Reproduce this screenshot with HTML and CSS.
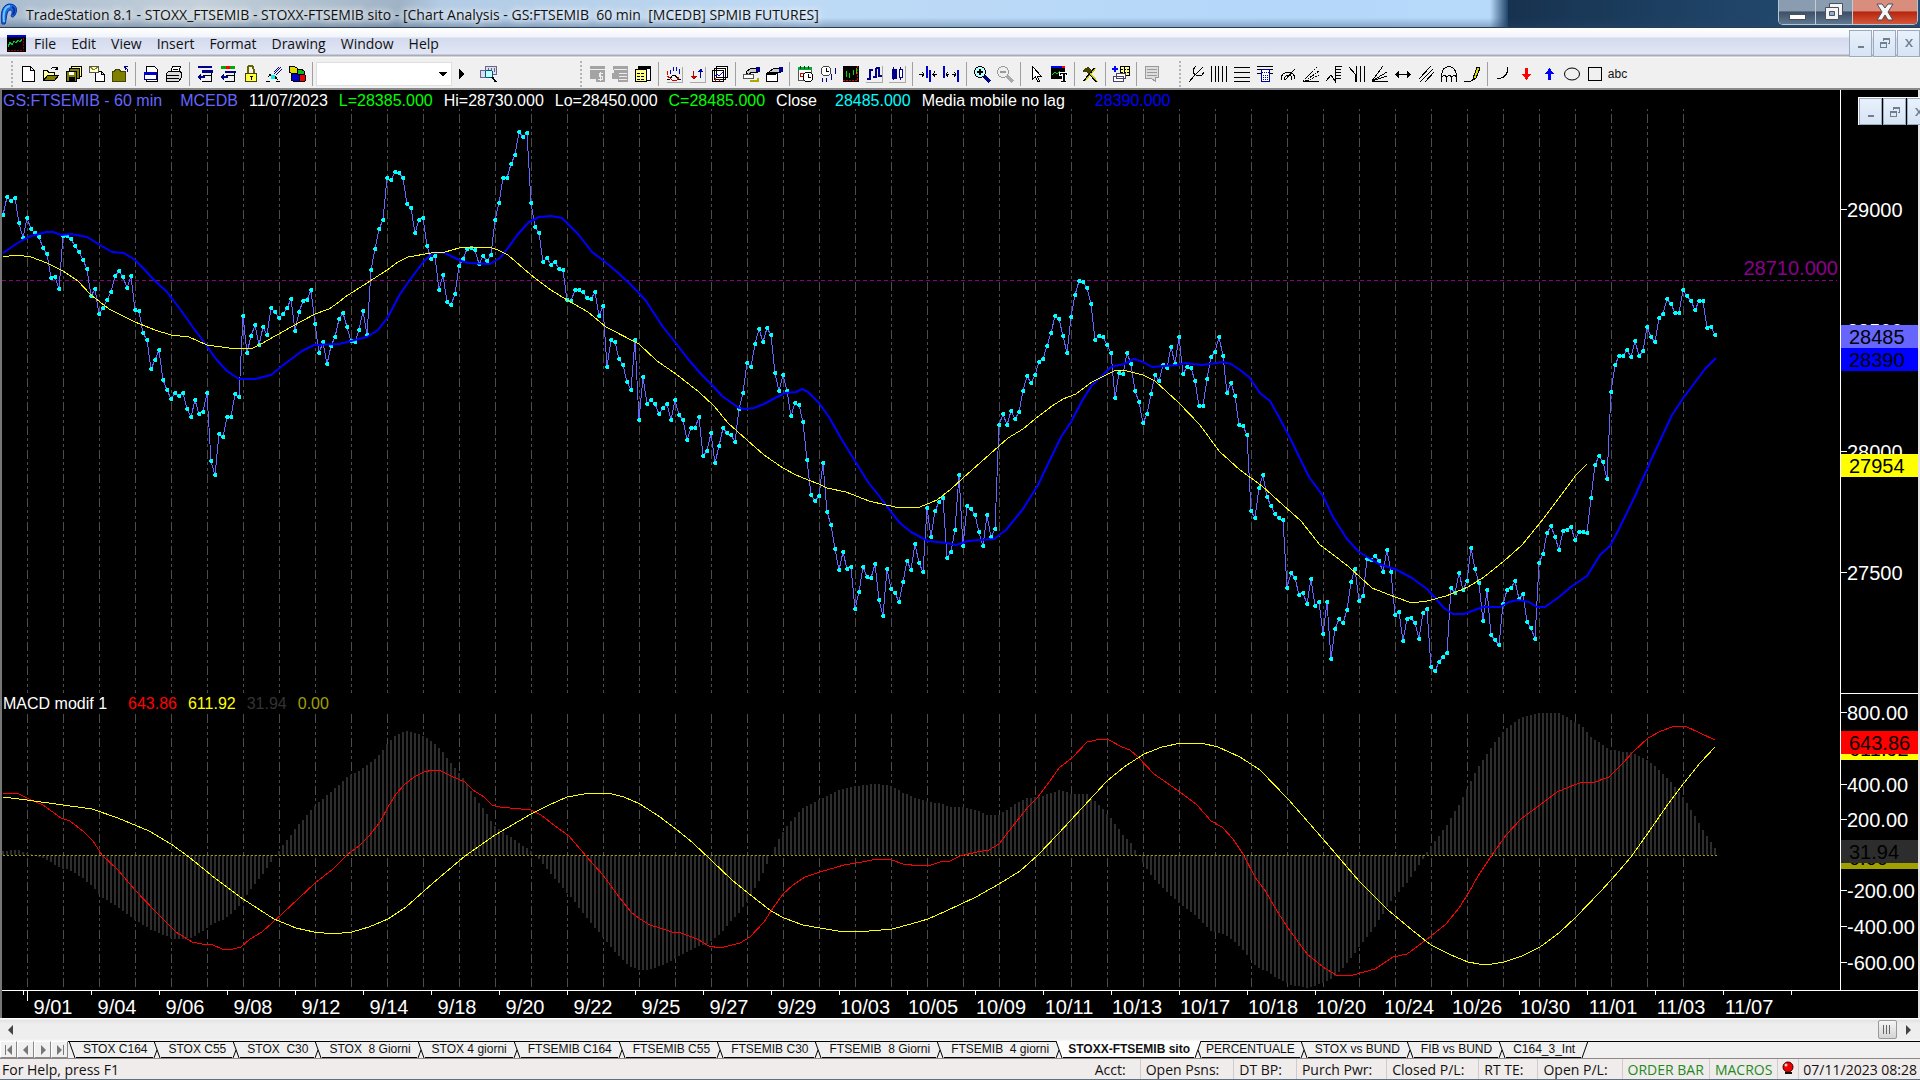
FILE: index.html
```html
<!DOCTYPE html>
<html lang="en">
<head>
<meta charset="utf-8">
<title>TradeStation 8.1 - STOXX_FTSEMIB</title>
<link rel="stylesheet" href="styles.css">
</head>
<body>
<header class="titlebar">
  <svg class="logo" viewBox="0 0 18 24"><path d="M2 22C0 12 2 3 9 2c8 0 9 6 6 11-1 2-3 3-4 1 2-4 1-6-1-6-4 1-3 8-5 14z" fill="#1b6be0" stroke="#0a2f9c"/><path d="M4 20C3 12 4 5 10 4" stroke="#6cc4ff" stroke-width="2" fill="none"/><path d="M12 5c3 1 3 4 1 8" stroke="#0a2f9c" stroke-width="2" fill="none"/></svg>
  <h1 class="caption">TradeStation 8.1 - STOXX_FTSEMIB - STOXX-FTSEMIB sito - [Chart Analysis - GS:FTSEMIB&nbsp; 60 min&nbsp; [MCEDB] SPMIB FUTURES]</h1>
  <div class="winbtns">
    <button class="win" aria-label="Minimize"><svg viewBox="0 0 36 24"><rect x="10.500" y="14.500" width="16" height="5" fill="#fff" stroke="#4a4f5c"/></svg></button>
    <button class="win" aria-label="Restore"><svg viewBox="0 0 36 24"><path d="M13.500 3.500h13v12h-13z" fill="#f4f4f4" stroke="#4a4f5c"/><path d="M9.500 7.500h13v12h-13z" fill="#f4f4f4" stroke="#4a4f5c"/><path d="M13.500 11.500h5v4h-5z" fill="#8fb0cc" stroke="#4a4f5c"/></svg></button>
    <button class="win close" aria-label="Close"><svg viewBox="0 0 36 24"><path d="M10 4h5l3 4 3-4h5l-5 8 5 8h-5l-3-5-3 5h-5l5-8z" fill="#f6f6f6" stroke="#4a4f5c"/></svg></button>
  </div>
</header>

<nav class="menubar">
  <svg class="doc" viewBox="0 0 19 17" shape-rendering="crispEdges"><path d="M0 0h19v17H0z"/><path d="M0 0h19v2H0z" fill="#00f"/><path d="M1 12l2-5 2 3 2-4 2 2 2-3 2 2 2-3" stroke="#0c3" fill="none"/><path d="M16 3v13M1 15h15" stroke="#900" stroke-dasharray="2 1" fill="none"/></svg>
  <a href="#file">File</a><a href="#edit">Edit</a><a href="#view">View</a><a href="#insert">Insert</a><a href="#format">Format</a><a href="#drawing">Drawing</a><a href="#window">Window</a><a href="#help">Help</a>
  <div class="mdi">
    <button aria-label="Minimize document"><svg viewBox="0 0 12 12"><path d="M3 9h6v2H3z"/></svg></button>
    <button aria-label="Restore document"><svg viewBox="0 0 12 12"><path d="M4 1h7v6H9V6h1V3H5v1H4zM1 5h7v6H1zM2 7v3h5V7z" fill-rule="evenodd"/></svg></button>
    <button aria-label="Close document"><svg viewBox="0 0 12 12"><path d="M2 2h2l2 3 2-3h2L7 6l3 4H8L6 7l-2 3H2l3-4z"/></svg></button>
  </div>
</nav>

<div class="toolbar" role="toolbar">
  <div class="group first">
    <span class="grip"></span>
    <button aria-label="New"><svg viewBox="0 0 18 18"><path d="M3.500 1.500h8l4 4v11h-12zM11.500 1.500v4h4" fill="#fff" stroke="#000"/></svg></button>
    <button aria-label="Open"><svg viewBox="0 0 18 18"><path d="M1.500 15.500v-10h4l1 2h6v3" fill="#ffffa0" stroke="#000"/><path d="M1.500 15.500l4-5h11l-4 5z" fill="#808000" stroke="#000"/><path d="M9.500 3.500q4-3 6 1m0-3v3h-3" fill="none" stroke="#000"/></svg></button>
    <button aria-label="Save all"><svg viewBox="0 0 18 18"><path d="M6.500 1.500h10v10h-10z" fill="#ff8" stroke="#000"/><path d="M4.500 3.500h10v10h-10z" fill="#808000" stroke="#000"/><path d="M1.500 6.500h10v10h-10z" fill="#808000" stroke="#000"/><path d="M4 7h5v3H4z" fill="#fff"/><path d="M4 12h6v4H4z"/></svg></button>
    <button aria-label="Mail"><svg viewBox="0 0 18 18"><path d="M7.500 6.500h6l3 3v7h-9zM13.500 6.500v3h3" fill="#fff" stroke="#000"/><path d="M1.500 1.500h9v6h-9z" fill="#ffc" stroke="#555"/><path d="M2 2l4 3 4-3" fill="none" stroke="#880"/></svg></button>
    <button aria-label="Close workspace"><svg viewBox="0 0 18 18"><path d="M1.500 16.500v-10h2l1-2h4l1 2h5v10z" fill="#808000" stroke="#440"/><path d="M17 7q0-4-4-5m1-1v4M13 1h4" fill="none" stroke="#008"/></svg></button>
    <span class="sep"></span>
    <button aria-label="Print preview"><svg viewBox="0 0 18 18"><path d="M4.500 1.500h8l3 3v12h-11z" fill="#fff" stroke="#000"/><path d="M2.500 7.500h12v7h-12z" fill="#fff" stroke="#008"/><path d="M2 7h13v3H2z" fill="#00c"/></svg></button>
    <button aria-label="Print"><svg viewBox="0 0 18 18"><path d="M5.500 8.500l2-7h8l-2 7z" fill="#fff" stroke="#000"/><path d="M1.500 8.500l2-2h12l1 2v4l-3 4h-12z" fill="#ddd" stroke="#000"/><path d="M2 10h12M2 13h12M8 4h5M7 6h5" stroke="#000"/></svg></button>
    <span class="sep"></span>
    <button aria-label="Chart list"><svg viewBox="0 0 18 18"><path d="M2 1h14v2H2zM6 5h11v3H6z" fill="#008"/><path d="M7 10.500h8M6 16.500h10M15.500 8v9" stroke="#000"/><path d="M1 12l4-3v2h4v2H5v2z" fill="#008"/></svg></button>
    <button aria-label="Radar list"><svg viewBox="0 0 18 18"><path d="M2 1h14v3H2z" fill="#0a0"/><path d="M7 1h4v3H7z" fill="#f00"/><path d="M6 6h11v2H6z" fill="#008"/><path d="M7 10.500h8M6 16.500h10M15.500 8v9" stroke="#000"/><path d="M1 12l4-3v2h4v2H5v2z" fill="#008"/></svg></button>
    <button aria-label="Lock"><svg viewBox="0 0 18 18"><path d="M5.500 8V4q0-3 3-3t3 3v4" fill="none" stroke="#660" stroke-width="2"/><path d="M3.500 8.500h11v8h-11z" fill="#ff4" stroke="#440"/><path d="M8 11h3v1h-1v3H9v-3H8z"/></svg></button>
    <button aria-label="Satellite"><svg viewBox="0 0 18 18"><path d="M9 9l7-7M11 10l6-6M9 7l5-5" stroke="#008"/><path d="M4 9l7 5M3 12q5-5 10 3M1 16h4M11 16h4" stroke="#000" fill="none"/><path d="M6 10h4v4H6z" fill="#0ee"/></svg></button>
    <button aria-label="Blocks"><svg viewBox="0 0 18 18"><path d="M1 2l4-1 4 2v5l-4 1-4-2z" fill="#dd0" stroke="#000"/><path d="M9 5l4-1 3 2v5H9z" fill="#0b2" stroke="#000"/><path d="M3 9l4-1 4 2v6l-4 1-4-2z" fill="#00c" stroke="#000"/><path d="M11 10l3-1 3 1v6l-3 1-3-1z" fill="#e00" stroke="#000"/></svg></button>
    <span class="sep"></span>
    <select class="symbol" aria-label="Symbol"><option></option></select>
    <button class="go" aria-label="Go"><svg viewBox="0 0 18 18"><path d="M7 4l5 5-5 5z"/></svg></button>
    <button class="find" aria-label="Symbol lookup"><svg viewBox="0 0 18 18"><path d="M6.500 1.500h11v8h-11zM1.500 5.500h5v7h-5z" fill="#dde" stroke="#668"/><path d="M9 3v4m3-4v4m3-4v4" stroke="#668"/><circle cx="10" cy="9" r="4" fill="#bff" stroke="#058"/><path d="M13 12l4 5" stroke="#000" stroke-width="2"/></svg></button>
  </div>

  <div class="group second">
    <span class="grip"></span>
    <button aria-label="Buy" disabled><svg viewBox="0 0 18 18"><path d="M2 1h15v16H8v-3H2z" fill="#a4a4a4"/><path d="M2 4.500h15" stroke="#eee"/><path d="M15 8.500h-4v3h3v3h-4M12.500 7v9" fill="none" stroke="#eee"/></svg></button>
    <button aria-label="Orders" disabled><svg viewBox="0 0 18 18"><path d="M2 1h15v16H7v-3H1V8h2z" fill="#a4a4a4"/><path d="M3 4.500h13M8 8.500h8M8 11.500h8M8 14.500h8" stroke="#eee"/></svg></button>
    <button aria-label="Data window"><svg viewBox="0 0 18 18"><path d="M4.500 1.500h12v14h-12z" fill="#fff" stroke="#000"/><path d="M4 1h13v3H4z"/><path d="M1.500 4.500h11v12h-11z" fill="#ff8" stroke="#000"/><path d="M3 8.500h8M3 11.500h8M3 14.500h8" stroke="#000" stroke-dasharray="3 1"/></svg></button>
    <span class="sep"></span>
    <button aria-label="Indicators"><svg viewBox="0 0 18 18"><path d="M17.500 2v15.500H2" fill="none" stroke="#aaa"/><path d="M5.500 5v4m3-7v4m3-4v4m3-2v5" stroke="#00c"/><path d="M2.500 6v4" stroke="#d00"/><path d="M2 15l3-1 3-4h2l3 4 3 1" fill="none" stroke="#000"/><path d="M2 11l3 2 2 2h5l2-3" fill="none" stroke="#c00"/></svg></button>
    <button aria-label="Signals"><svg viewBox="0 0 18 18"><path d="M17.500 2v15.500H2" fill="none" stroke="#aaa"/><path d="M5 6h1v5h3l-3 4-3-4h2z" fill="#b00"/><path d="M12 13h1V7h2l-2-4-3 4h2z" fill="#00a"/></svg></button>
    <button aria-label="Strategies"><svg viewBox="0 0 18 18"><path d="M5.500 1.500h11v11h-11zM3.500 3.500h11v11h-11zM1.500 5.500h11v11h-11z" fill="#fff" stroke="#000"/><path d="M3 12l3-3 2 2 4-4" fill="none" stroke="#00c"/><path d="M4.500 13v3m4-2v2" stroke="#c00"/></svg></button>
    <span class="sep"></span>
    <button aria-label="Format symbol"><svg viewBox="0 0 18 18"><path d="M4 7l5-4h6v4h-5l-4 3z" fill="#ccc" stroke="#000"/><path d="M14 2h4v5h-4z" fill="#008"/><path d="M1.500 9.500h10v4h-10z" fill="#fff" stroke="#555"/><path d="M8 16h8v-3" fill="none" stroke="#aa0" stroke-width="2"/></svg></button>
    <button aria-label="Format window"><svg viewBox="0 0 18 18"><path d="M4 7l5-4h6v4h-5l-4 3z" fill="#ccc" stroke="#000"/><path d="M14 2h4v5h-4z" fill="#008"/><path d="M1.500 8.500h11v8h-11z" fill="#fff" stroke="#000"/><path d="M2 7h9v3H2z"/></svg></button>
    <span class="sep"></span>
    <button aria-label="Sessions"><svg viewBox="0 0 18 18"><path d="M2.500 3.500h13v12h-13z" fill="#fff" stroke="#555"/><path d="M2 2h14v3H2z" fill="#0a3"/><path d="M4.500 1v3m4-3v3m4-3v3" stroke="#040"/><path d="M4.500 8.500h3v3h-3z" fill="none" stroke="#d00"/><circle cx="12" cy="12" r="5" fill="#fff" stroke="#000"/><path d="M12 9v3h3" fill="none" stroke="#000"/></svg></button>
    <button aria-label="Interval"><svg viewBox="0 0 18 18"><circle cx="7" cy="6" r="5" fill="#fff" stroke="#444"/><path d="M7 3v3h3" fill="none" stroke="#000"/><path d="M3.500 13v4m4-4v4m5-8v6m4-12v6" stroke="#008"/></svg></button>
    <button aria-label="OHLC"><svg viewBox="0 0 18 18"><path d="M1 1h16v16H1z"/><path d="M4.500 6v6m3-4v5m4-8v5m3-7v6" stroke="#0d0"/><path d="M1 15.500h14.500V1" fill="none" stroke="#d00" stroke-dasharray="2 1"/></svg></button>
    <button aria-label="Bars"><svg viewBox="0 0 18 18"><path d="M17.500 1v16.500H1" fill="none" stroke="#aaa"/><path d="M5 4v11M2 14h3M5 5h3M11 3v9h-3M11 3h4M14 2v9h3" fill="none" stroke="#008" stroke-width="2"/></svg></button>
    <button aria-label="Candlesticks"><svg viewBox="0 0 18 18"><path d="M17.500 1v16.500H1" fill="none" stroke="#aaa"/><path d="M4 4h4v9H4zM5.500 2v13" fill="#008" stroke="#008"/><path d="M11.500 4.500h3v8h-3zM12.500 2v2m0 9v2" fill="#fff" stroke="#008"/></svg></button>
    <span class="sep"></span>
    <button aria-label="Compress"><svg viewBox="0 0 18 18"><path d="M8 1v12M11 5v12" stroke="#00c" stroke-width="2"/><path d="M0 9.500h5M3 7l2 2-2 3M18 9.500h-4m2-3l-2 3 2 2" fill="none" stroke="#000"/></svg></button>
    <button aria-label="Expand"><svg viewBox="0 0 18 18"><path d="M2 1v12M16 5v12" stroke="#00c" stroke-width="2"/><path d="M4 9.500h3m3 0h4M6 7L4 9l2 3m6-5l2 2-2 3" fill="none" stroke="#000"/></svg></button>
    <span class="sep"></span>
    <button aria-label="Zoom in"><svg viewBox="0 0 18 18"><path d="M11 11l6 6" stroke="#008" stroke-width="3"/><circle cx="7" cy="7" r="5.500" fill="#bff" stroke="#000"/><path d="M4 7h6M7 4v6" stroke="#000" stroke-width="2"/></svg></button>
    <button aria-label="Zoom out" disabled><svg viewBox="0 0 18 18"><path d="M11 11l6 6" stroke="#aaa" stroke-width="3"/><circle cx="7" cy="7" r="5.500" fill="#eee" stroke="#999"/><path d="M4 7h6" stroke="#999" stroke-width="2"/></svg></button>
    <span class="sep"></span>
    <button aria-label="Pointer"><svg viewBox="0 0 18 18"><path d="M5.500 1.500v13l3-3 2 5h2l-2-5h4z" fill="#fff" stroke="#000"/></svg></button>
    <button aria-label="Text tool"><svg viewBox="0 0 18 18"><path d="M1 1h14v13H1z"/><path d="M1 1h11v2H1z" fill="#00f"/><path d="M12 1h3v2h-3z" fill="#f00"/><path d="M2 10l3-3 2 2 3-3" fill="none" stroke="#0d0"/><path d="M9 7h9v4h-2v5h1v2h-6v-2h1v-5H9z" fill="#fff"/><path d="M10 8h7v2h-1V9h-1v7h1v1h-5v-1h2V9h-2v1h-1z"/></svg></button>
    <span class="sep"></span>
    <button aria-label="Build"><svg viewBox="0 0 18 18"><path d="M3 16L14 3" stroke="#000" stroke-width="2"/><path d="M7 7l9 10" stroke="#000" stroke-width="2"/><path d="M4 16L15 3M8 7l9 10" stroke="#cc0"/><path d="M2 7V5l5-3 4 3-4 4-2-2z" fill="#440"/></svg></button>
    <span class="sep"></span>
    <button aria-label="Add shortcut"><svg viewBox="0 0 18 18"><path d="M8.500 1.500h9v9h-9z" fill="#ff8" stroke="#000"/><path d="M9 4.500h8M9 7.500h8M12.500 2v8" stroke="#000" stroke-dasharray="2 1"/><path d="M4.500 8.500h9v5h-9zM1.500 11.500h10v5h-10z" fill="#fff" stroke="#446"/><path d="M0 4h6M3 1v6" stroke="#00f" stroke-width="2"/></svg></button>
    <span class="sep"></span>
    <button aria-label="Notes" disabled><svg viewBox="0 0 18 18"><path d="M2.500 1.500h13v11h-3v4l-4-3h-6z" fill="#ddd" stroke="#999"/><path d="M4 4.500h10M4 7.500h10M4 10.500h10" stroke="#999"/></svg></button>
  </div>

  <div class="group third">
    <span class="grip"></span>
    <button aria-label="Andrews pitchfork"><svg viewBox="0 0 18 18"><path d="M2 17l6-7M8 10l8-8M6 5q0 7 9 5M6 5l3-4M15 10l2-3" fill="none" stroke="#000"/></svg></button>
    <button aria-label="Vertical lines"><svg viewBox="0 0 18 18"><path d="M1.500 1v16M5.500 1v16M8.500 1v16M12.500 1v16M16.500 1v16" stroke="#000"/></svg></button>
    <button aria-label="Horizontal lines"><svg viewBox="0 0 18 18"><path d="M1 2.500h16M1 7.500h16M1 12.500h16M1 16.500h16" stroke="#000"/></svg></button>
    <button aria-label="Calculator"><svg viewBox="0 0 18 18"><path d="M1 1.500h16M1 4.500h16M1 8.500h16" stroke="#000"/><path d="M5.500 4.500h8v12h-8z" fill="#fff" stroke="#00a"/><path d="M6 7.500h8M7 10.500h6M7 12.500h6M7 14.500h6" stroke="#00a" stroke-dasharray="1 1"/></svg></button>
    <button aria-label="Arcs"><svg viewBox="0 0 18 18"><path d="M2 15q0-8 8-8 5 0 6 7M5 15q1-5 5-5 3 0 3 5M6 15L16 4" fill="none" stroke="#000"/></svg></button>
    <button aria-label="Fan dotted"><svg viewBox="0 0 18 18"><path d="M1 16.500h16" stroke="#000"/><path d="M1 16L16 1M3 16L17 6M5 16l12-6" stroke="#000" stroke-dasharray="2 1"/></svg></button>
    <button aria-label="Retracement"><svg viewBox="0 0 18 18"><path d="M1 16l5-6 4 6V1h7M10 4.500h6M10 7.500h6M10 10.500h6M10 13.500h6" fill="none" stroke="#000"/></svg></button>
    <button aria-label="Time lines"><svg viewBox="0 0 18 18"><path d="M1 2l6 7v8M8.500 1v16M12.500 1v16M16.500 1v16" fill="none" stroke="#000"/></svg></button>
    <button aria-label="Fan"><svg viewBox="0 0 18 18"><path d="M1 16.500h16M1 16L12 1M1 16L16 7M1 16l15-5" stroke="#000"/></svg></button>
    <button aria-label="Horizontal extend"><svg viewBox="0 0 18 18"><path d="M2 9.500h14" stroke="#000"/><path d="M5 6v7L1 9.500zM13 6v7l4-3.500z"/></svg></button>
    <button aria-label="Parallel lines"><svg viewBox="0 0 18 18"><path d="M2 14L14 1M3 17L16 4M8 17l9-10" stroke="#000"/></svg></button>
    <button aria-label="Cycles"><svg viewBox="0 0 18 18"><path d="M1.500 17v-7q1-8 7.500-8.500Q15.500 2 16.500 10v7M1.500 12q3-3 5 0 3-3 5 0 3-3 5 0M6.500 12v5M11.500 12v5" fill="none" stroke="#000"/></svg></button>
    <button aria-label="Pencil"><svg viewBox="0 0 18 18"><path d="M10.500 12L14 2l3 1-4 10-3 2z" fill="#dd0" stroke="#000"/><path d="M1 16.500h6l3-2" fill="none" stroke="#000"/></svg></button>
    <span class="sep"></span>
    <button aria-label="Arc"><svg viewBox="0 0 18 18"><path d="M14 2q0 11-11 12" fill="none" stroke="#000"/></svg></button>
    <button aria-label="Down arrow"><svg viewBox="0 0 18 18"><path d="M8 3h3v6h3l-4.500 6L5 9h3z" fill="#f00"/></svg></button>
    <button aria-label="Up arrow"><svg viewBox="0 0 18 18"><path d="M8 15h3V9h3L9.500 3 5 9h3z" fill="#00f"/></svg></button>
    <button aria-label="Ellipse"><svg class="smooth" viewBox="0 0 18 18"><ellipse cx="9" cy="9" rx="7.500" ry="6" fill="none" stroke="#000"/></svg></button>
    <button aria-label="Rectangle"><svg viewBox="0 0 18 18"><path d="M2.500 2.500h13v13h-13z" fill="none" stroke="#000"/></svg></button>
    <button class="abc" aria-label="Text">abc</button>
  </div>
</div>

<main class="chart">
  <section class="panel">
    <p class="legend price-legend"><span class="c-violet">GS:FTSEMIB - 60 min</span><span class="c-violet">MCEDB</span><span>11/07/2023</span><span class="c-green">L=28385.000</span><span>Hi=28730.000</span><span>Lo=28450.000</span><span class="c-green">C=28485.000</span><span>Close</span><span class="c-cyan">28485.000</span><span>Media mobile no lag</span><span class="c-blue">28390.000</span></p>
    <svg id="price" viewBox="2 90 1838 603"></svg>
  </section>
  <section class="scale"><svg id="priceScale" viewBox="1840 90 78 603"></svg></section>
  <section class="panel">
    <p class="legend macd-legend"><span>MACD modif 1</span><span class="c-red">643.86</span><span class="c-yellow">611.92</span><span class="c-dim">31.94</span><span class="c-olive">0.00</span></p>
    <svg id="macd" viewBox="2 693 1838 297"></svg>
  </section>
  <section class="scale"><svg id="macdScale" viewBox="1840 693 78 297"></svg></section>
  <section class="dates"><svg id="dates" viewBox="2 990 1916 28"></svg></section>
  <div class="mdi floating">
    <button aria-label="Minimize chart"><svg viewBox="0 0 12 12"><path d="M3 9h6v2H3z"/></svg></button>
    <button aria-label="Restore chart"><svg viewBox="0 0 12 12"><path d="M4 1h7v6H9V6h1V3H5v1H4zM1 5h7v6H1zM2 7v3h5V7z" fill-rule="evenodd"/></svg></button>
    <button aria-label="Close chart"><svg viewBox="0 0 12 12"><path d="M2 2h2l2 3 2-3h2L7 6l3 4H8L6 7l-2 3H2l3-4z"/></svg></button>
  </div>
</main>

<div class="hscroll">
  <button aria-label="Scroll left"><svg viewBox="0 0 10 12"><path d="M7 1v10L2 6z"/></svg></button>
  <span class="track"><span class="thumb"></span></span>
  <button aria-label="Scroll right"><svg viewBox="0 0 10 12"><path d="M3 1v10l5-5z"/></svg></button>
</div>

<nav class="tabs">
  <div class="tabnav">
    <button aria-label="First"><svg viewBox="0 0 12 12"><path d="M2 1h1v10H2zM9 1v10L4 6z"/></svg></button>
    <button aria-label="Previous"><svg viewBox="0 0 12 12"><path d="M8 1v10L3 6z"/></svg></button>
    <button aria-label="Next"><svg viewBox="0 0 12 12"><path d="M4 1v10l5-5z"/></svg></button>
    <button aria-label="Last"><svg viewBox="0 0 12 12"><path d="M9 1h1v10H9zM3 1v10l5-5z"/></svg></button>
  </div>
  <svg class="edge" viewBox="0 0 8 17"><path d="M1 0l6 17"/></svg>
  <a href="#t1">STOX C164</a><svg class="edge" viewBox="0 0 8 17"><path d="M1 0l6 17M1 17l3-8"/></svg>
  <a href="#t2">STOX C55</a><svg class="edge" viewBox="0 0 8 17"><path d="M1 0l6 17M1 17l3-8"/></svg>
  <a href="#t3">STOX  C30</a><svg class="edge" viewBox="0 0 8 17"><path d="M1 0l6 17M1 17l3-8"/></svg>
  <a href="#t4">STOX  8 Giorni</a><svg class="edge" viewBox="0 0 8 17"><path d="M1 0l6 17M1 17l3-8"/></svg>
  <a href="#t5">STOX 4 giorni</a><svg class="edge" viewBox="0 0 8 17"><path d="M1 0l6 17M1 17l3-8"/></svg>
  <a href="#t6">FTSEMIB C164</a><svg class="edge" viewBox="0 0 8 17"><path d="M1 0l6 17M1 17l3-8"/></svg>
  <a href="#t7">FTSEMIB C55</a><svg class="edge" viewBox="0 0 8 17"><path d="M1 0l6 17M1 17l3-8"/></svg>
  <a href="#t8">FTSEMIB C30</a><svg class="edge" viewBox="0 0 8 17"><path d="M1 0l6 17M1 17l3-8"/></svg>
  <a href="#t9">FTSEMIB  8 Giorni</a><svg class="edge" viewBox="0 0 8 17"><path d="M1 0l6 17M1 17l3-8"/></svg>
  <a href="#t10">FTSEMIB  4 giorni</a><svg class="edge" viewBox="0 0 8 17"><path class="lit" d="M1 0l6 17h1V0z"/><path d="M1 0l6 17M1 17l3-8"/></svg>
  <a href="#t11" class="active">STOXX-FTSEMIB sito</a><svg class="edge" viewBox="0 0 8 17"><path class="lit" d="M7 0L1 17H0V0z"/><path d="M7 0L1 17M4 9l3 8"/></svg>
  <a href="#t12" class="after">PERCENTUALE</a><svg class="edge" viewBox="0 0 8 17"><path d="M1 0l6 17M1 17l3-8"/></svg>
  <a href="#t13">STOX vs BUND</a><svg class="edge" viewBox="0 0 8 17"><path d="M1 0l6 17M1 17l3-8"/></svg>
  <a href="#t14">FIB vs BUND</a><svg class="edge" viewBox="0 0 8 17"><path d="M1 0l6 17M1 17l3-8"/></svg>
  <a href="#t15">C164_3_Int</a><svg class="edge" viewBox="0 0 8 17"><path d="M7 0L1 17"/></svg>
</nav>

<footer class="status">
  <span class="help">For Help, press F1</span>
  <span>Acct:</span><span>Open Psns:</span><span>DT BP:</span><span>Purch Pwr:</span><span>Closed P/L:</span><span>RT TE:</span><span>Open P/L:</span><span class="on">ORDER BAR</span><span class="on">MACROS</span>
  <span class="ball"><svg viewBox="0 0 12 14"><circle cx="6" cy="6" r="5" fill="#e00" stroke="#400"/><path d="M3 12h7" stroke="#111" stroke-width="2"/><circle cx="4" cy="4" r="1.500" fill="#fcc"/></svg></span>
  <span>07/11/2023 08:28</span>
</footer>
<script src="chart.js"></script>
</body>
</html>
```

FILE: styles.css
```css
* { box-sizing: border-box; }
body {
  margin: 0;
  min-height: 100vh;
  display: flex;
  flex-direction: column;
  background: #f0eeec;
  font: 14px/18px "Open Sans", "Noto Sans", sans-serif;
  color: #111;
  overflow-x: hidden;
}
button { margin: 0; padding: 0; border: 0; background: none; font: inherit; color: inherit; }
a { color: inherit; text-decoration: none; }
svg { display: block; }

/* Title bar */
.titlebar {
  display: flex;
  align-items: flex-start;
  height: 28px;
  border-bottom: 1px solid #2c3d50;
  background:
    linear-gradient(180deg, transparent 65%, rgba(40, 70, 110, .35)),
    linear-gradient(90deg, #a9bccf 0, #c4d0da 200px, #9fb3c6 400px, #b3cbe4 440px, #bedaf5 800px, #b4d7fa 1300px, #b8dafa 1490px, #1f4468 1508px, #17324f 78%, #1f4468 90%, #274e74);
}
.logo { width: 18px; height: 24px; margin: 2px 8px 0 0; }
.caption {
  flex: 1;
  margin: 0;
  padding: 5px 0 0;
  font-size: 14px;
  font-weight: 400;
  line-height: 20px;
  white-space: nowrap;
  text-shadow: 0 0 6px #fff, 0 0 10px #fff;
}
.winbtns {
  display: flex;
  height: 25px;
  margin-right: 2px;
  border: 1px solid #b8c4d0;
  border-top: 0;
  border-radius: 0 0 5px 5px;
  overflow: hidden;
}
.win { width: 37px; display: grid; place-items: center; background: linear-gradient(#8a9cb0 0 45%, #3c5068 50%, #60788f); border-right: 1px solid #c3ccd6; }
.win svg { width: 36px; height: 24px; }
.win.close { width: 64px; border: 0; background: linear-gradient(#d98d7d 0 45%, #b8250f 50%, #d4573a); }

/* Menu */
.menubar {
  display: flex;
  align-items: center;
  height: 30px;
  padding-left: 7px;
  background: linear-gradient(#fff 0, #f1f4fb 9px, #d5dbee 10px, #e0e6f4 26px, #a9adb8 27px, #a9adb8 28px, #f8f8f8 29px);
}
.menubar .doc { width: 19px; height: 17px; margin-right: 8px; }
.menubar a { margin-right: 15px; padding-top: 2px; }
.mdi { display: flex; gap: 1px; }
.menubar .mdi { margin-left: auto; }
.mdi button { width: 23px; height: 27px; display: grid; place-items: center; border: 1px solid #9aabc0; background: linear-gradient(#e9f1fb, #d6e4f4); }
.mdi svg { width: 12px; height: 12px; fill: #6f7f92; }
.floating { position: absolute; right: -12px; top: 7px; border-top: 1px solid #fff; border-left: 1px solid #fff; }

/* Toolbar */
.toolbar {
  display: flex;
  height: 32px;
  padding: 2px 0 0 9px;
  background: #f0f0f0;
  border-bottom: 2px solid #8a8a8a;
  overflow: hidden;
}
.group { display: flex; align-items: center; }
.group.second { margin-left: 79px; }
.group.third { margin-left: 14px; }
.group button { width: 23px; height: 24px; display: grid; place-items: center; flex: none; }
.group svg { width: 18px; height: 18px; shape-rendering: crispEdges; }
.group svg.smooth { shape-rendering: auto; }
.grip { width: 7px; height: 26px; background: repeating-linear-gradient(#b4b4b4 0 2px, transparent 2px 4px) 2px 0 / 2px 100% no-repeat; }
.group .go { width: 16px; }
.group .find { margin-left: 8px; }
.sep { width: 8px; height: 24px; background: linear-gradient(#a0a0a0, #a0a0a0) 4px 0 / 1px 100% no-repeat; }
.symbol {
  appearance: none;
  width: 136px;
  height: 24px;
  border: 1px solid #dedede;
  border-radius: 0;
  background: linear-gradient(135deg, #000 50%, transparent 50%) 126px 9px / 4px 5px no-repeat, linear-gradient(225deg, #000 50%, transparent 50%) 122px 9px / 4px 5px no-repeat, #fff;
}
.group .abc { font: 12px/16px "Liberation Sans", Arial, sans-serif; }

/* Chart */
.chart {
  position: relative;
  display: grid;
  grid-template-columns: 1838fr 78fr;
  background: #000;
  border-left: 2px solid #777;
  border-right: 2px solid #e4e4e4;
  font-family: "Liberation Sans", Arial, sans-serif;
}
.panel { position: relative; }
.chart svg { width: 100%; height: auto; }
.chart .mdi svg { width: 12px; }
.dates { grid-column: 1 / -1; }
.legend {
  position: absolute;
  left: 1px;
  top: 2px;
  display: flex;
  margin: 0;
  color: #fff;
  font-size: 16px;
  line-height: 18px;
  white-space: nowrap;
}
.legend span { margin-right: 11px; }
.price-legend span:first-child { margin-right: 18px; }
.price-legend span:nth-child(8) { margin-right: 18px; }
.price-legend span:nth-child(10) { margin-right: 30px; }
.macd-legend span:first-child { margin-right: 21px; }
.c-violet { color: #6666ff; }
.c-green { color: #0f0; }
.c-cyan { color: #0ff; }
.c-blue { color: #00f; }
.c-red { color: #f00; }
.c-yellow { color: #ff0; }
.c-dim { color: #333; }
.c-olive { color: #a0a000; }

.chart svg text { font-size: 20px; fill: #fff; }
.chart svg text.tag { fill: #000; }
.chart svg text.level { fill: #8b008b; }
.line { fill: none; shape-rendering: crispEdges; }
.line.thick { shape-rendering: auto; stroke-linejoin: round; }
.grid { stroke: #4c4c4c; stroke-dasharray: 9 3 3 3 3 3; fill: none; }
.axis { stroke: #fff; fill: none; shape-rendering: crispEdges; }
.hist { fill: #2d2d2d; shape-rendering: crispEdges; }
.dots { fill: #0ff; shape-rendering: crispEdges; }

/* Scroll bar */
.hscroll { display: flex; height: 23px; align-items: center; padding: 0 7px 0 6px; background: linear-gradient(#fff 0 1px, #e2e2e2 2px, #eee 6px 21px, #fafafa); }
.hscroll svg { width: 10px; height: 12px; fill: #444; }
.track { flex: 1; display: flex; justify-content: flex-end; padding-right: 6px; }
.thumb { width: 19px; height: 19px; border: 1px solid #999; border-radius: 2px; background: repeating-linear-gradient(90deg, #666 0 1px, transparent 1px 3px) 4px 4px / 9px 9px no-repeat, linear-gradient(#f6f6f6, #d4d4d4); }

/* Tabs */
.tabs {
  display: flex;
  height: 18px;
  border-bottom: 1px solid #8d8787;
  background: linear-gradient(#000, #000) 68px 0 / 100% 1px no-repeat, #f0f0f0;
  font: 12px/17px "Liberation Sans", Arial, sans-serif;
  white-space: pre;
  overflow: hidden;
}
.tabnav { display: flex; }
.tabnav button { width: 17px; height: 17px; display: grid; place-items: center; border: 1px solid; border-color: #fff #888 #888 #fff; }
.tabnav svg { width: 12px; height: 12px; fill: #777; }
.tabs a { padding: 0 6px 0 7px; border-bottom: 1px solid #000; height: 17px; }
.tabs a.active { padding: 0 4px 0 5px; background: #fff; font-weight: 700; }
.tabs a.after { padding: 0 5px 0 4px; }
.edge { width: 8px; height: 17px; flex: none; fill: none; stroke: #000; }
.edge .lit { fill: #fff; stroke: none; }

/* Status bar */
.status {
  display: flex;
  height: 21px;
  border-bottom: 1px solid #5a7184;
  background: #f0eceb;
  white-space: nowrap;
  line-height: 22px;
}
.status span { padding: 0 14px 0 5px; border-right: 1px solid #d0cccb; }
.status .help { flex: 1; padding-left: 2px; border: 0; }
.status .on { color: #1e8a1e; padding: 0 5px; }
.status .ball { padding: 2px 4px; }
.ball svg { width: 12px; height: 14px; }
.status span:last-child { padding: 0 3px 0 4px; border: 0; }
```

FILE: chart.js
```js
const STEP = 4, X0 = 3;

// Closes as blocks: [first y, units per pixel, values]
const closes = [
  [100, 2.6133, [300,253,263,256,321,360,308,337,347,357,386,402,465,463,494,355,355,363,381,397,418,441,512,494,559,544,522,501,460,447,462,491,460,548,551,608,626,703,679,653,732,758,782,765,773,765,807,828,784,820,815,765,943,979,873,880,828,828,768,776,564,661,617,588,640,592,613,543,554,569,559,543,520,603,554,525,522,496,585,661,632,690,643,619,572,556,592,630,632,601,551,614,444,389,337,313,204,209,188,190,204,271,282,347,313,308,381,415,407,496,458,527,536,507,434,415,389,387,392,428,407,420,405,313,268,204,204,167,144,84,96,86,268,332,347,423,413,431,423,441,444,522,525,496,496,501,517,520,502,564]],
  [200, 3, [318,500,420,426,477,495,545,570,420,660,531,612,600,612,642,624,612,660,600,645,660,720,684,684,651,768,753,699,789,738,684,699,705,726,627,579,489,501,432,387,426,384,405,519,573,525,573,648,608,615,665,780,885,903,888,789,936,975,1047,1110,1056,1107,1101,1227,1176,1101,1131,1134,1092,1200,1248,1107,1167,1179,1206,1146,1083,1110,1032,1089,1116,924,1011,933,906,894,1074,1056,990,825,1038,918,927,945,996,1038,945,1011,987,675,642,675,633,657,636,573,528,549,525,486,477,438,399,348,357,408,459,351,285,243,246,264,312,420,408,411,435,459,594,519,522,459,492,573,606,669,642,582,525,543,495,504,441,492,411,522,501,504,543,618,618,537,471,456,411,468,579,549,588,675]],
  [240, 3, [558,585,813,834,744,705,771,798,822,834,840,1044,999,1014,1065,1059,1092,1017,1098,1086,1182,1086,1257,1167,1137,1149,1110,1026,987,1083,1068,957,960,948,963,996,930,996,1125,1116,1203,1137,1134,1149,1197,1119,1107,1281,1293,1266,1251,1239,1044,1059,999,1050,1023,924,987,1029,1143,1050,1185,1200,1215,1092,1050,1044,1023,1077,1062,1146,1164,1197,969,942,879,858,891,930,873,870,861,900,876,876,879,774,675,648,666,717,456,375,348,348,330,351,303,348,333,261,291,306,234,222,177,192,219,219,150,168,183,210,183,183,264,261,285]]
].flatMap(([y0, k, v]) => v.map(n => Math.round(y0 + n / k)));

const fast = [3,253,16,244,23,240,31,236,39,234,46,232,53,232,61,235,71,234,87,237,100,245,112,252,124,253,135,260,143,268,155,281,167,292,180,309,192,326,204,342,216,359,227,371,239,379,255,379,271,375,282,366,302,351,314,345,339,344,355,340,367,337,378,330,388,317,400,294,412,277,424,261,433,253,445,253,453,257,461,261,469,263,490,264,500,258,508,248,518,234,529,222,539,217,551,216,562,218,578,234,592,252,604,261,616,271,629,283,639,293,646,301,663,327,675,342,688,359,701,374,712,385,722,396,739,408,745,409,754,408,764,404,775,398,785,393,796,392,802,389,808,392,819,403,829,417,842,440,855,461,868,482,880,497,891,512,900,523,911,532,928,541,947,543,956,545,968,541,994,539,1006,530,1023,509,1038,485,1048,464,1061,437,1071,422,1082,401,1092,385,1103,375,1111,367,1124,364,1134,359,1143,362,1152,367,1177,365,1185,363,1202,365,1223,362,1231,364,1240,370,1249,377,1260,393,1270,401,1279,417,1290,438,1309,477,1323,496,1333,517,1347,539,1359,552,1379,564,1395,569,1412,578,1427,589,1444,608,1453,614,1464,614,1483,607,1500,607,1509,602,1518,600,1529,602,1537,607,1545,607,1559,597,1572,586,1587,576,1600,555,1610,546,1618,531,1635,496,1652,458,1672,415,1684,397,1705,369,1716,358];

const slow = [3,257,16,255,31,257,47,263,63,271,78,281,91,295,109,309,135,322,155,330,171,335,189,337,207,345,229,348,251,349,261,344,291,327,315,314,329,309,339,302,345,297,367,283,387,270,398,262,408,257,431,253,445,252,459,248,473,247,489,247,498,250,508,255,531,275,551,290,567,300,588,312,606,327,639,344,657,361,676,374,699,392,714,406,728,423,747,440,764,455,783,468,796,475,808,480,819,484,827,488,846,492,869,501,886,505,900,508,920,507,937,500,951,489,963,478,981,462,1008,438,1023,429,1035,419,1052,406,1063,399,1076,394,1092,382,1114,371,1123,370,1143,375,1155,381,1179,403,1200,425,1219,451,1240,470,1262,486,1283,505,1301,521,1320,545,1331,553,1349,567,1372,588,1395,597,1412,603,1427,601,1446,596,1468,587,1484,577,1504,561,1522,545,1540,523,1559,498,1576,475,1587,464];

const macdLine = [3,793,17,793,31,800,43,805,61,818,70,821,84,832,93,841,102,855,118,870,135,890,155,911,176,932,192,942,202,944,213,945,222,949,233,949,241,947,250,939,262,932,282,914,315,883,333,869,347,855,359,846,369,836,380,822,388,807,396,794,404,785,414,777,424,772,433,770,441,771,451,776,465,782,473,790,484,797,492,805,500,807,531,810,541,815,555,826,569,836,586,856,603,875,616,893,631,912,640,919,650,925,660,928,672,932,681,933,697,939,709,946,720,948,740,943,750,937,764,922,773,908,783,894,793,885,805,877,820,872,844,865,862,862,877,859,892,860,903,864,920,866,931,865,940,862,950,861,960,856,977,852,989,850,999,844,1009,831,1028,807,1038,797,1050,781,1059,768,1073,757,1087,742,1101,739,1109,740,1122,747,1130,750,1138,757,1154,774,1180,792,1197,805,1211,821,1222,827,1233,839,1243,854,1255,877,1266,892,1277,911,1288,928,1307,954,1323,967,1336,975,1353,975,1375,969,1393,957,1407,954,1426,940,1446,924,1459,908,1469,892,1478,876,1492,855,1506,835,1522,818,1540,805,1557,792,1574,785,1583,782,1592,783,1609,777,1622,764,1633,752,1648,738,1661,731,1672,727,1685,726,1700,733,1715,740];

const signalLine = [3,797,27,800,63,805,92,809,118,818,149,831,171,844,189,857,216,879,243,899,274,919,296,928,314,932,333,934,352,932,369,927,388,919,406,907,433,883,465,856,495,835,531,814,549,805,567,797,584,794,608,793,624,797,640,804,660,817,676,829,693,843,711,860,732,880,748,893,771,911,784,918,803,925,820,928,838,931,858,932,892,929,911,924,928,919,946,911,976,897,999,884,1020,871,1038,855,1058,834,1083,807,1107,781,1124,767,1144,754,1162,747,1181,743,1201,743,1218,747,1240,757,1260,770,1288,799,1323,839,1359,881,1388,910,1412,930,1431,945,1451,955,1468,962,1479,964,1492,964,1504,962,1522,956,1540,947,1559,933,1576,917,1600,892,1612,879,1631,857,1648,833,1666,807,1684,783,1700,763,1715,747];

function at(line, x) {
  let i = 0;
  while (i < line.length - 4 && line[i + 2] < x) i += 2;
  const t = (x - line[i]) / (line[i + 2] - line[i]);
  return line[i + 1] + t * (line[i + 3] - line[i + 1]);
}
const path = (d, cls, extra = '') => `<path class="${cls}" d="${d}" ${extra}/>`;
const poly = (pts, color, width, cls = '') => `<polyline class="line ${cls}" points="${pts.join(' ')}" stroke="${color}" stroke-width="${width}"/>`;
const text = (x, y, s, cls = '', anchor = 'start') => `<text x="${x}" y="${y}" class="${cls}" text-anchor="${anchor}">${s}</text>`;
const tag = (y, color, s) => `<rect x="1841" y="${y}" width="77" height="23" fill="${color}"/>` + text(1849, y + 19, s, 'tag');
const draw = (id, parts) => { document.getElementById(id).innerHTML = parts.join(''); };

const gridAt = (top, bottom) => {
  let d = '';
  for (let x = 27; x <= 1683; x += 36) d += `M${x}.5 ${top}V${bottom}`;
  return d;
};

const pts = closes.flatMap((y, i) => [X0 + STEP * i, y]);
draw('price', [
  path(gridAt(109, 693), 'grid', 'stroke-dashoffset="19"'),
  path('M2 280.5H1837', 'line', 'stroke="#8b008b" stroke-dasharray="4 3"'),
  text(1838, 275, '28710.000', 'level', 'end'),
  poly(pts, '#6666ff', 1),
  path(closes.map((y, i) => `M${X0 + STEP * i - 1} ${y - 2}h3v4h-3zm-1 1h1v2h-1z`).join(''), 'dots'),
  poly(fast, '#00f', 2, 'thick'),
  poly(slow, '#ff0', 1)
]);

const tick = y => `M1840 ${y}.5h7`;
const level = (y, s) => text(1847, y + 8, s);
draw('priceScale', [
  level(209, '29000'), level(330, '28500'), level(451, '28000'), level(572, '27500'),
  path('M1840.5 90V693' + [209, 330, 451, 572].map(tick).join(''), 'axis'),
  tag(348, '#00f', '28390'), tag(325, '#6666ff', '28485'), tag(454, '#ff0', '27954')
]);

const zero = 855;
let bars = '';
for (let x = X0; x <= 1715; x += STEP) {
  const y = Math.round(zero + at(macdLine, x) - at(signalLine, x));
  bars += `M${x - 1} ${zero}V${y}h2V${zero}z`;
}
draw('macd', [
  path(gridAt(714, 988), 'grid'),
  path(bars, 'hist'),
  path(`M3 ${zero}.5H1717`, 'line', 'stroke="#a0a000" stroke-dasharray="2 2"'),
  poly(macdLine, '#f00', 1),
  poly(signalLine, '#ff0', 1)
]);
const macdTicks = [[712, '800.00'], [784, '400.00'], [819, '200.00'], [890, '-200.00'], [926, '-400.00'], [962, '-600.00']];
draw('macdScale', [
  ...macdTicks.map(([y, s]) => level(y, s)),
  path('M1840.5 693V990M1840 693.5h78' + macdTicks.map(t => tick(t[0])).join(''), 'axis'),
  tag(737, '#ff0', '611.92'), tag(731, '#f00', '643.86'),
  tag(846, '#a0a000', '0.00'), tag(840, '#2d2d2d', '31.94')
]);

const days = ['9/04','9/06','9/08','9/12','9/14','9/18','9/20','9/22','9/25','9/27','9/29','10/03','10/05','10/09','10/11','10/13','10/17','10/18','10/20','10/24','10/26','10/30','11/01','11/03','11/07'];
let ticks = 'M2 990.5H1918M23.500 990v5M27.500 990v11';
for (let i = 0; i <= days.length; i++) ticks += `M${91 + 68 * i}.5 990v5`;
draw('dates', [
  path(ticks, 'axis'),
  text(53, 1014, '9/01', '', 'middle'),
  ...days.map((d, i) => text(117 + 68 * i, 1014, d, '', 'middle'))
]);
```
